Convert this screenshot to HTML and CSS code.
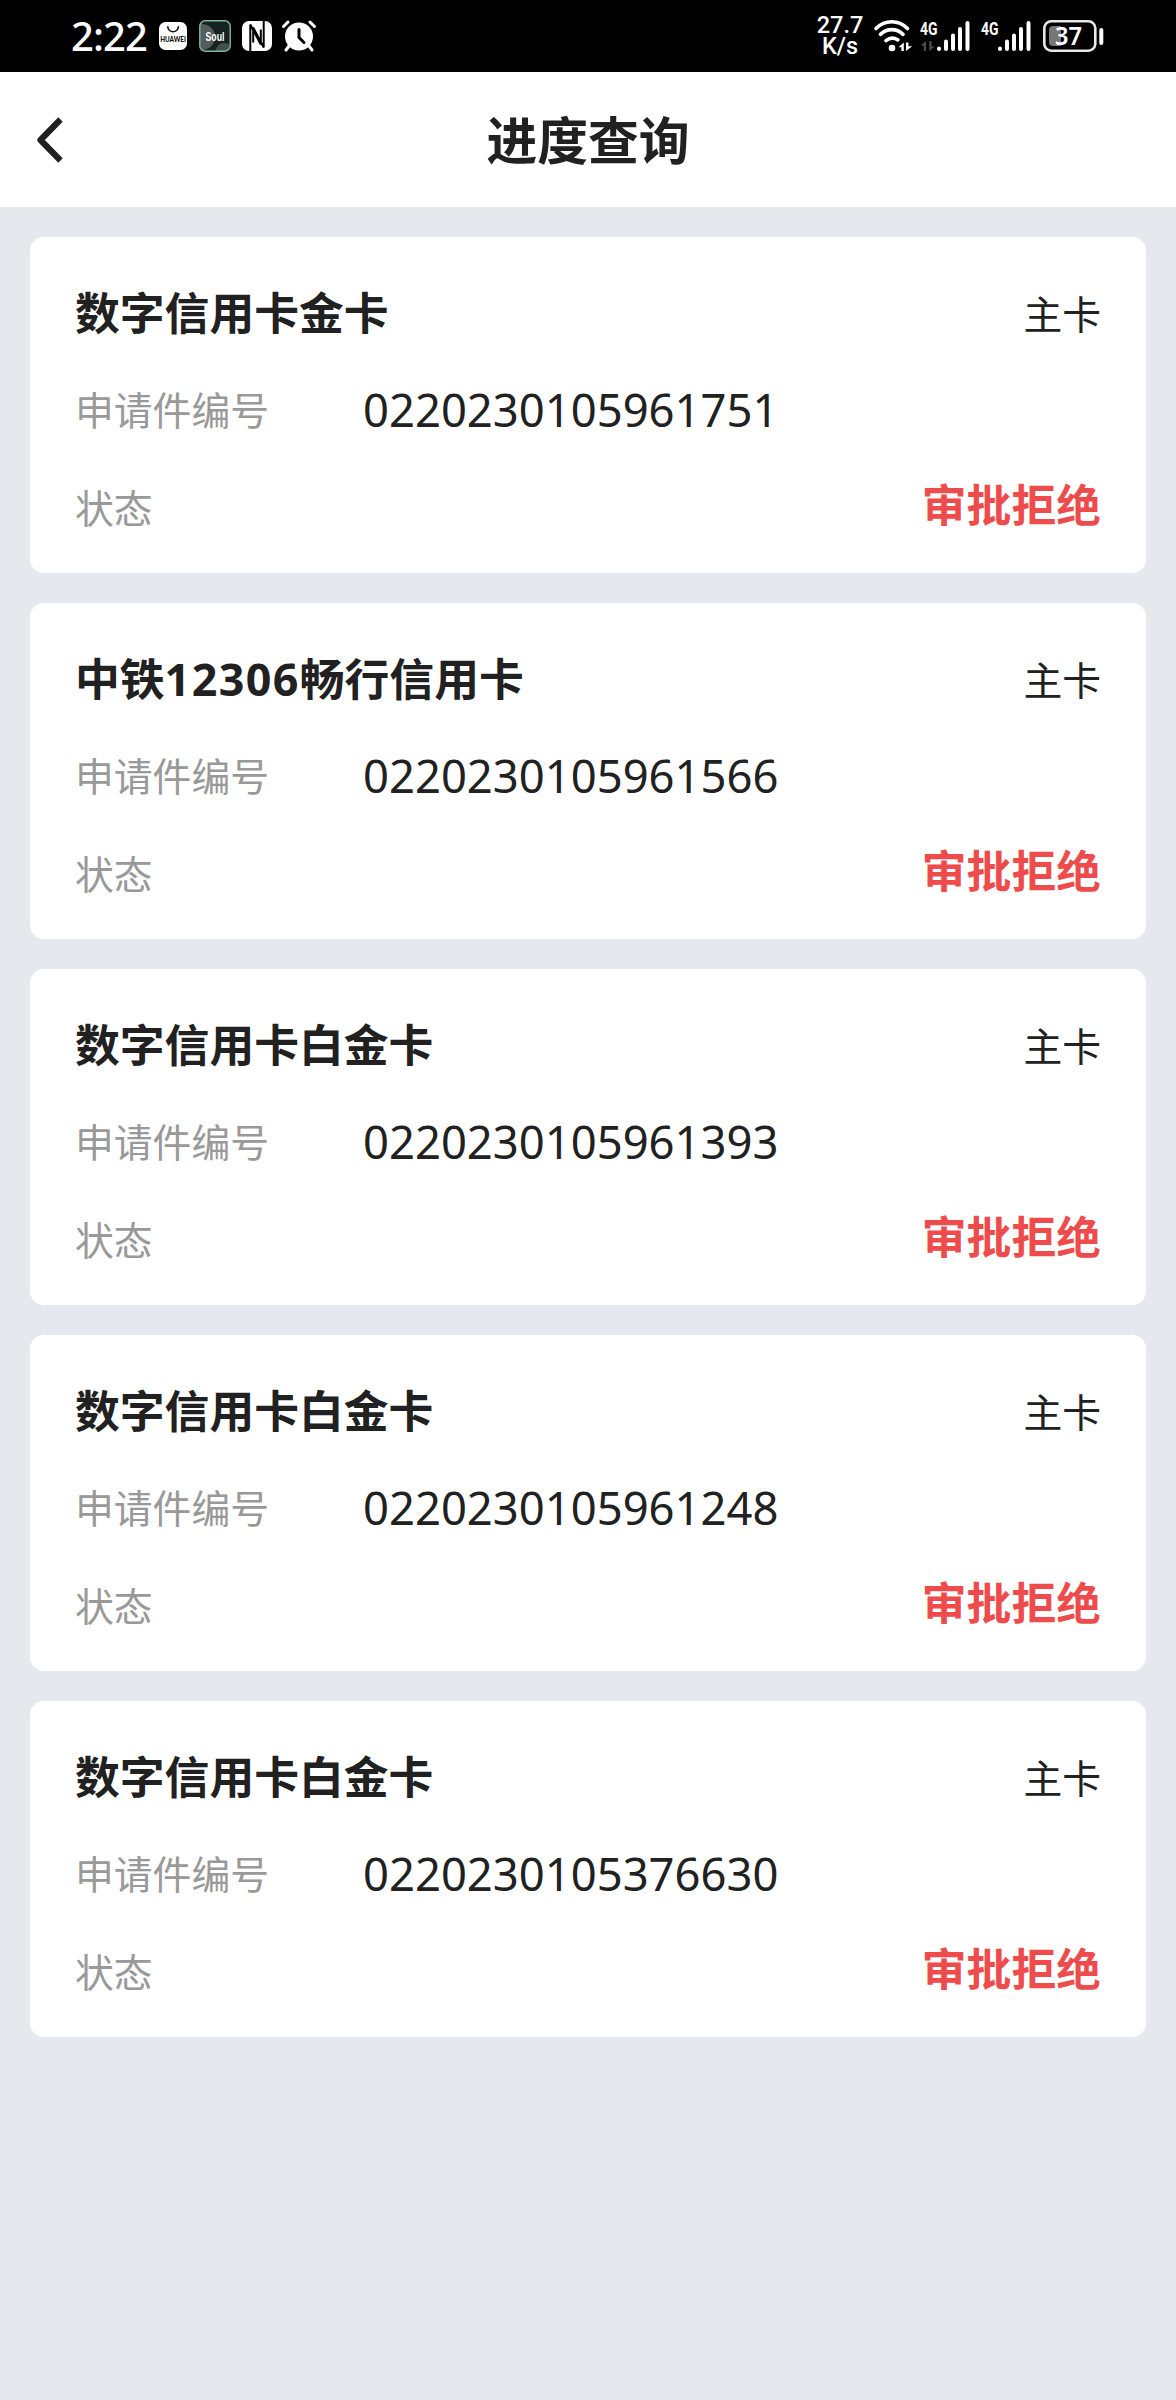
FILE: index.html
```html
<!DOCTYPE html>
<html lang="zh-CN">
<head>
<meta charset="utf-8">
<title>进度查询</title>
<link rel="stylesheet" href="styles.css">
</head>
<body>
<div class="status-bar">
  <div class="status-left">
    <span class="clock">2:22</span>
    <svg class="icon-store" width="28" height="28" viewBox="0 0 28 28">
      <rect width="28" height="28" rx="6.500" fill="#fff"/>
      <path d="M8.800 4.800a5.300 4.900 0 0 0 10.600 0" fill="none" stroke="#111" stroke-width="1.600" stroke-linecap="round"/>
      <text class="store-text" x="1.200" y="19.500" textLength="25.600" lengthAdjust="spacingAndGlyphs">HUAWEI</text>
    </svg>
    <svg class="icon-soul" width="32" height="32" viewBox="0 0 32 32">
      <defs><clipPath id="soul"><rect x="1" y="1" width="30" height="30" rx="5"/></clipPath></defs>
      <rect width="32" height="32" rx="6" fill="#142321"/>
      <g clip-path="url(#soul)"><circle cx="3" cy="17" r="13" fill="#555c5c"/><circle cx="25" cy="31" r="8" fill="#46504e"/></g>
      <rect x=".8" y=".8" width="30.400" height="30.400" rx="5.500" fill="none" stroke="#80b5a5" stroke-width="1.400"/>
      <text class="soul-text" x="6.500" y="21" textLength="19" lengthAdjust="spacingAndGlyphs">Soul</text>
    </svg>
    <svg class="icon-nfc" width="30" height="30" viewBox="0 0 30 30">
      <rect width="30" height="30" rx="7" fill="#fff"/>
      <path d="M8.300 30V3.500L18.800 23.500V8.500M21.700 0V26.500L11.200 6.500V21.500" fill="none" stroke="#000" stroke-width="2"/>
    </svg>
    <svg class="icon-alarm" width="34" height="32" viewBox="0 0 34 32">
      <circle cx="17" cy="16.500" r="14" fill="#fff"/>
      <path d="M1.500 6.500L6 2M28 2l4.500 4.500M7 26l-3 4M27 26l3 4" fill="none" stroke="#fff" stroke-width="3" stroke-linecap="round"/>
      <path d="M17 9.500v8l5 5" fill="none" stroke="#000" stroke-width="3" stroke-linecap="round" stroke-linejoin="round"/>
    </svg>
  </div>
  <div class="status-right">
    <div class="speed"><span>27.7</span><span>K/s</span></div>
    <svg class="icon-wifi" width="39" height="32" viewBox="0 0 39 32">
      <g fill="none" stroke="#fff" stroke-width="3.700" stroke-linecap="round"><path d="M2 8.500C11-.5 24.500-.5 33.500 8.500M6.500 14.300c6.500-6.300 16-6.300 22.500 0M12 20.600c4-3.200 7.500-3.200 11.800-.8"/></g>
      <circle cx="18" cy="28" r="3.300" fill="#fff"/>
      <path d="M29.800 22.500v8.500h-2.400v-3.700h-2.900zM32 31v-8.500h2.400v3.700h3.800z" fill="#fff"/>
    </svg>
    <svg class="icon-signal" width="50" height="32" viewBox="0 0 50 32">
      <text class="net-text" x="0" y="15" textLength="17.500" lengthAdjust="spacingAndGlyphs">4G</text>
      <path d="M6 21v10H3.700v-5.500H.5zM9.300 31V21h2.300v5.500H15z" fill="#4b4b4b"/>
      <path d="M19 28.500v.5M26 21.500v7.500M33 15.500V29M40 9v20M47.500 3v26" fill="none" stroke="#fff" stroke-width="4" stroke-linecap="round"/>
    </svg>
    <svg class="icon-signal" width="50" height="32" viewBox="0 0 50 32">
      <text class="net-text" x="0" y="15" textLength="17.500" lengthAdjust="spacingAndGlyphs">4G</text>
      <path d="M19 28.500v.5M26 21.500v7.500M33 15.500V29M40 9v20M47.500 3v26" fill="none" stroke="#fff" stroke-width="4" stroke-linecap="round"/>
    </svg>
    <svg class="icon-battery" width="61" height="32" viewBox="0 0 61 32">
      <rect x="1.300" y="1.300" width="51" height="29.400" rx="7" fill="none" stroke="#e8e8e8" stroke-width="2.600"/>
      <path d="M10 6h8v20h-8q-4 0-4-4V10q0-4 4-4z" fill="#777"/>
      <rect x="56.300" y="8" width="4" height="17" rx="2" fill="#fff"/>
      <text class="battery-text" x="12" y="25" textLength="27" lengthAdjust="spacingAndGlyphs">37</text>
    </svg>
  </div>
</div>

<header class="nav">
  <svg class="back" width="28" height="46" viewBox="0 0 28 46">
    <path d="M24.500 2.500L4.500 23L24.500 43.500" fill="none" stroke="#212121" stroke-width="6.200" stroke-linejoin="round"/>
  </svg>
  <h1 class="nav-title">进度查询</h1>
</header>

<main class="list">
  <section class="card">
    <div class="row"><h2 class="name">数字信用卡金卡</h2><span class="kind">主卡</span></div>
    <div class="row"><span class="label label-wide">申请件编号</span><span class="number">0220230105961751</span></div>
    <div class="row"><span class="label">状态</span><span class="state">审批拒绝</span></div>
  </section>
  <section class="card">
    <div class="row"><h2 class="name">中铁<span class="digits">12306</span>畅行信用卡</h2><span class="kind">主卡</span></div>
    <div class="row"><span class="label label-wide">申请件编号</span><span class="number">0220230105961566</span></div>
    <div class="row"><span class="label">状态</span><span class="state">审批拒绝</span></div>
  </section>
  <section class="card">
    <div class="row"><h2 class="name">数字信用卡白金卡</h2><span class="kind">主卡</span></div>
    <div class="row"><span class="label label-wide">申请件编号</span><span class="number">0220230105961393</span></div>
    <div class="row"><span class="label">状态</span><span class="state">审批拒绝</span></div>
  </section>
  <section class="card">
    <div class="row"><h2 class="name">数字信用卡白金卡</h2><span class="kind">主卡</span></div>
    <div class="row"><span class="label label-wide">申请件编号</span><span class="number">0220230105961248</span></div>
    <div class="row"><span class="label">状态</span><span class="state">审批拒绝</span></div>
  </section>
  <section class="card">
    <div class="row"><h2 class="name">数字信用卡白金卡</h2><span class="kind">主卡</span></div>
    <div class="row"><span class="label label-wide">申请件编号</span><span class="number">0220230105376630</span></div>
    <div class="row"><span class="label">状态</span><span class="state">审批拒绝</span></div>
  </section>
</main>
</body>
</html>
```
FILE: styles.css
```css
* { box-sizing: border-box; }
body {
  margin: 0;
  min-height: 2400px;
  background: #e7e8ed;
  color: #212121;
  font-family: "Noto Sans CJK SC", sans-serif;
}
svg { display: block; flex: none; overflow: visible; }
h1, h2 { margin: 0; }

.status-bar {
  display: flex;
  justify-content: space-between;
  height: 72px;
  padding: 0 72px 0 71px;
  background: #000;
  color: #fff;
}
.status-left, .status-right { display: flex; align-items: center; }
.clock {
  width: 88px;
  font: 500 40px/72px "Noto Sans", sans-serif;
  letter-spacing: -.9px;
  white-space: nowrap;
}
.icon-soul { margin-left: 12px; }
.icon-nfc { margin-left: 11px; }
.icon-alarm { margin-left: 10px; }
.store-text { font: 900 7px Lato, sans-serif; fill: #111; }
.soul-text { font: 700 13px "Liberation Sans", sans-serif; fill: #fff; }
.speed {
  display: flex;
  flex-direction: column;
  align-items: center;
  width: 48px;
  margin-right: 10px;
  font: 500 23.5px/21px Roboto, sans-serif;
}
.icon-signal { margin-left: 7px; }
.icon-signal + .icon-signal { margin-left: 11px; }
.net-text { font: 700 19px Roboto, sans-serif; fill: #fff; }
.icon-battery { margin-left: 12px; }
.battery-text { font: 600 25px "Noto Sans", sans-serif; fill: #fff; }

.nav {
  display: grid;
  grid-template-columns: 100px 1fr 100px;
  align-items: center;
  height: 135px;
  background: #fff;
}
.back { margin-left: 36px; }
.nav-title {
  grid-column: 2;
  padding-bottom: 4px;
  text-align: center;
  font-size: 50.8px;
  line-height: 70px;
  font-weight: 700;
}

.list { display: grid; gap: 30px; padding: 30px; }
.card {
  display: grid;
  grid-template-rows: 96px 98px 97px;
  height: 336px;
  padding: 26px 45px 0;
  border-radius: 14px;
  background: #fff;
}
.row { display: flex; align-items: center; line-height: 60px; }
.name { padding-bottom: 1px; font-size: 44.8px; font-weight: 700; }
.digits { font-family: "Noto Sans", sans-serif; line-height: 1; letter-spacing: 1.4px; }
.kind { margin-left: auto; padding-top: 1px; font-size: 38.8px; }
.label { font-size: 38.8px; color: #999; }
.label-wide { width: 288px; }
.number { padding-top: 2px; font-family: "Noto Sans", sans-serif; font-size: 45.4px; }
.state { margin-left: auto; padding-bottom: 6px; font-size: 44.8px; font-weight: 700; color: #ee4c4c; }
```
